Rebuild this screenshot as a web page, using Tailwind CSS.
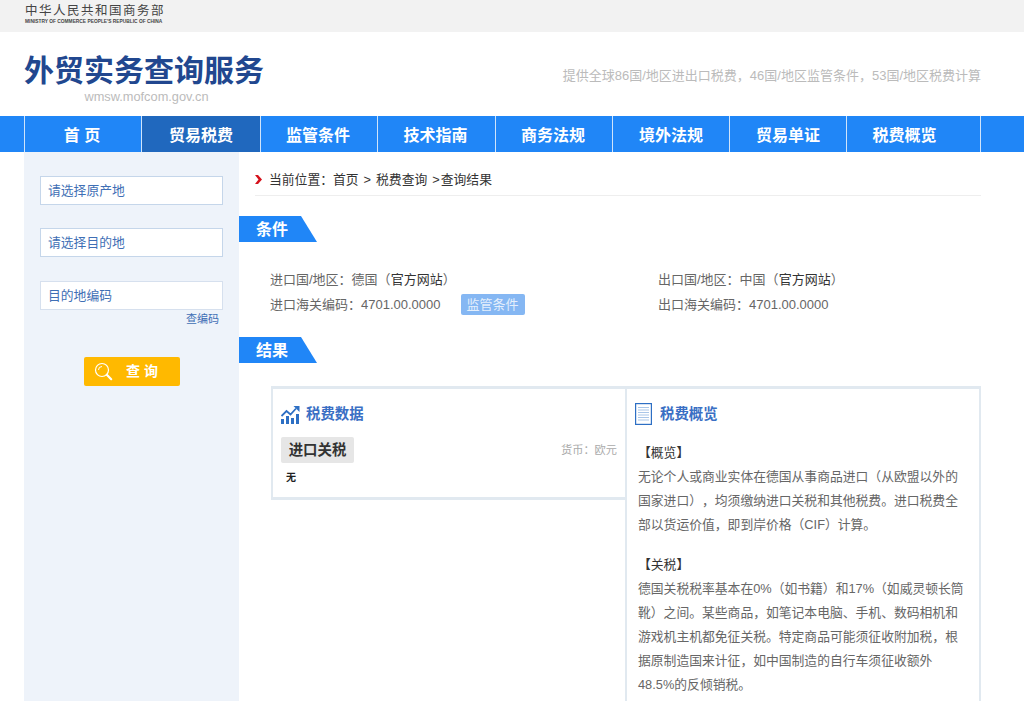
<!DOCTYPE html>
<html lang="zh-CN">

<head>
    <meta charset="UTF-8">
    <title>外贸实务查询服务</title>
    <script src="https://cdn.jsdelivr.net/npm/@tailwindcss/browser@4"></script>
</head>

<body class="bg-white h-[701px] overflow-hidden font-['Liberation_Sans','Noto_Sans_CJK_SC',sans-serif] text-[12.8px] text-[#666] [text-spacing-trim:space-all]">
    <!-- Top bar -->
    <div class="h-8 bg-[#f2f2f2] pl-[25px] pt-[4px]">
        <div class="text-[12.5px] leading-[14px] tracking-[1.5px] text-[#444]">中华人民共和国商务部</div>
        <div class="text-[4.850px] leading-[7px] font-bold text-[#444] whitespace-nowrap">MINISTRY OF COMMERCE PEOPLE'S REPUBLIC OF CHINA</div>
    </div>

    <!-- Header -->
    <div class="h-[84px] flex justify-between pl-6 pr-[43px]">
        <div class="w-[242px] pt-[20px]">
            <div class="text-[30px] leading-[38px] font-bold text-[#21478f] whitespace-nowrap">外贸实务查询服务</div>
            <div class="text-[12.8px] leading-[16px] text-[#bbb] text-center pl-[3px] -mt-[1px]">wmsw.mofcom.gov.cn</div>
        </div>
        <div class="pt-[35px] text-[13px] leading-[18px] text-[#bbb]">提供全球86国/地区进出口税费，46国/地区监管条件，53国/地区税费计算</div>
    </div>

    <!-- Nav -->
    <div class="h-9 bg-[#2086f7] pl-6 flex">
        <div class="flex h-9 border-l border-r border-[#cfe4fb] text-white text-[16px] font-bold leading-[39px] text-center">
            <a class="w-[117px] pr-[2px] border-r border-[#cfe4fb]">首 页</a>
            <a class="w-[119px] border-r border-[#cfe4fb] bg-[#2068be]">贸易税费</a>
            <a class="w-[117px] pr-[2px] border-r border-[#cfe4fb]">监管条件</a>
            <a class="w-[118px] pr-[2px] border-r border-[#cfe4fb]">技术指南</a>
            <a class="w-[117px] pr-[2px] border-r border-[#cfe4fb]">商务法规</a>
            <a class="w-[117px] border-r border-[#cfe4fb]">境外法规</a>
            <a class="w-[117px] border-r border-[#cfe4fb]">贸易单证</a>
            <a class="w-[133px] pr-[18px]">税费概览</a>
        </div>
    </div>

    <div class="flex pl-6 h-[549px]">
        <!-- Sidebar -->
        <div class="w-[215px] bg-[#eef3fa] pl-4 pt-[23.500px]">
            <div class="w-[183px] h-[29px] bg-white border border-[#c5d6ea] pl-[7px] leading-[28px] text-[#3f6fb5]">请选择原产地</div>
            <div class="w-[183px] h-[29px] mt-[23.500px] bg-white border border-[#c5d6ea] pl-[7px] leading-[28px] text-[#3f6fb5]">请选择目的地</div>
            <div class="w-[183px] h-[29px] mt-[23.500px] bg-white border border-[#d6e0ee] pl-[7px] leading-[28px] text-[#3f6fb5]">目的地编码</div>
            <div class="w-[179px] text-right text-[11px] leading-[18px] text-[#3f6fb5]">查编码</div>
            <div class="w-[96px] h-[29px] ml-11 mt-[29px] bg-[#ffb900] rounded-[2px] flex items-center pl-[10px] text-white text-[14px] font-bold">
                <svg class="w-[19px] h-[19px]" viewBox="0 0 19 19" fill="none" stroke="#fff">
                    <circle cx="8" cy="8" r="6.500" stroke-width="1.200"></circle>
                    <path d="M4.500 8a3.500 3.500 0 0 1 3.500-3.500" stroke-width="1"></path>
                    <path d="M12.800 12.800l4.400 4.400" stroke-width="2.200" stroke-linecap="round"></path>
                </svg>
                <span class="ml-[13px] tracking-[4px]">查询</span>
            </div>
        </div>

        <!-- Main -->
        <div class="w-[742px]">
            <div class="ml-4 h-11 pt-[12px] border-b border-[#eee] flex items-center text-[#333] leading-[20px]">
                <svg class="w-[7px] h-[9px] mr-[7px]" viewBox="0 0 7 9"><path d="M0 0h3l4 4.500l-4 4.500h-3l3.500-4.500z" fill="#d5121c"></path></svg>
                <span>当前位置：首页<span class="mx-[5px]">&gt;</span>税费查询<span class="ml-[5px] mr-[1px]">&gt;</span>查询结果</span>
            </div>

            <div class="mt-5 w-[78px] h-[26px] bg-[#2086f7] [clip-path:polygon(0_0,62px_0,100%_100%,0_100%)] pl-[17px] text-white text-[16px] font-bold leading-[28px]">条件</div>

            <div class="mt-[25px] ml-[31px] grid grid-cols-[388px_1fr] leading-[25px] text-[13px]">
                <div>进口国/地区：德国（<span class="text-[#333]">官方网站</span>）</div>
                <div>出口国/地区：中国（<span class="text-[#333]">官方网站</span>）</div>
                <div class="flex items-center">进口海关编码：4701.00.0000<span class="ml-5 w-16 h-[21px] bg-[#85b7f3] rounded-[2px] text-center leading-[21px] text-[#e4effc]">监管条件</span></div>
                <div>出口海关编码：4701.00.0000</div>
            </div>

            <div class="mt-[20px] w-[78px] h-[26px] bg-[#2086f7] [clip-path:polygon(0_0,62px_0,100%_100%,0_100%)] pl-[17px] text-white text-[16px] font-bold leading-[28px]">结果</div>

            <!-- Result panels -->
            <div class="mt-[23px] ml-8 w-[710px] flex items-start border-t-[3px] border-[#e1e9f0]">
                <div class="w-[354px] h-[111px] border-l-[2px] border-b-[3px] border-[#e1e9f0] pl-[8px] pt-[14px]">
                    <div class="flex items-center h-[24px] text-[#3a6fc4] text-[14.400px] font-bold">
                        <svg class="w-[19px] h-[18px] mr-[6px]" viewBox="0 0 19 18" fill="#2d6fc4">
                            <path d="M0 18v-5h3v5zM5 18v-8h3v8zM10 18v-6h3v6zM15 18v-10h3v10z"></path>
                            <path d="M0.500 10l5-5 4 3.500 5.500-6" fill="none" stroke="#2d6fc4" stroke-width="1.800"></path>
                            <path d="M12.500 0h6v6z"></path>
                        </svg>
                        税费数据
                    </div>
                    <div class="mt-[10px] flex justify-between items-center pr-[8px]">
                        <div class="w-[73px] h-[26px] bg-[#e6e6e6] rounded-[2px] text-center leading-[26px] text-[14.400px] font-bold text-[#333]">进口关税</div>
                        <div class="text-[11.200px] text-[#aaa]">货币：欧元</div>
                    </div>
                    <div class="mt-[8px] ml-[5px] text-[10px] leading-[14px] font-bold text-[#222]">无</div>
                </div>
                <div class="w-[356px] h-[400px] border-l-[2px] border-r-[2px] border-[#e1e9f0] pl-[8px] pt-[14px]">
                    <div class="flex items-center h-[24px] text-[#3a6fc4] text-[14.400px] font-bold">
                        <svg class="w-[17px] h-[22px] mr-[8px] -mt-[2px]" viewBox="0 0 17 22" fill="none" stroke="#2d6fc4">
                            <rect x="0.600" y="0.600" width="15.800" height="20.800" stroke-width="1.200"></rect>
                            <path d="M3 4.500h11M3 7h11M3 9.500h11M3 12h11M3 14.500h11M3 17h11" stroke="#a9c6e8"></path>
                        </svg>
                        税费概览
                    </div>
                    <div class="mt-[14px] pl-[3px] pr-[12px] leading-[24px]">
                        <div class="text-[#333]">【概览】</div>
                        <div>无论个人或商业实体在德国从事商品进口（从欧盟以外的国家进口），均须缴纳进口关税和其他税费。进口税费全部以货运价值，即到岸价格（CIF）计算。</div>
                        <div class="mt-[16px] text-[#333]">【关税】</div>
                        <div>德国关税税率基本在0%（如书籍）和17%（如威灵顿长筒靴）之间。某些商品，如笔记本电脑、手机、数码相机和游戏机主机都免征关税。特定商品可能须征收附加税，根据原制造国来计征，如中国制造的自行车须征收额外48.5%的反倾销税。</div>
                    </div>
                </div>
            </div>
        </div>
    </div>
</body>

</html>
